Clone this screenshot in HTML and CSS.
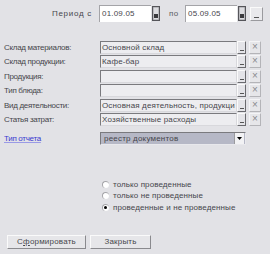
FILE: index.html
```html
<!DOCTYPE html>
<html>
<head>
<meta charset="utf-8">
<link rel="stylesheet" href="styles.css">
</head>
<body>
<div class="form">
  <div class="period">
    <span class="period-label">Период с</span>
    <div class="date">
      <span class="date-value">01.09.05</span>
      <span class="cal"><svg width="8" height="15" viewBox="0 0 8 15"><rect x="0.5" y="0.5" width="7" height="14" fill="#9a9a9e" stroke="#55555a"/><rect x="1.5" y="1.5" width="5" height="12" fill="#dcdce0"/><rect x="2" y="8" width="4" height="4" fill="#3a3a3e"/></svg></span>
    </div>
    <span class="po">по</span>
    <div class="date">
      <span class="date-value">05.09.05</span>
      <span class="cal"><svg width="8" height="15" viewBox="0 0 8 15"><rect x="0.5" y="0.5" width="7" height="14" fill="#9a9a9e" stroke="#55555a"/><rect x="1.5" y="1.5" width="5" height="12" fill="#dcdce0"/><rect x="2" y="8" width="4" height="4" fill="#3a3a3e"/></svg></span>
    </div>
    <span class="more-btn"><span class="dash"></span></span>
  </div>

  <div class="fields">
    <span class="lbl">Склад материалов:</span>
    <div class="input"><span class="val">Основной склад</span><span class="pick"><span class="dash"></span></span></div>
    <span class="clear">×</span>

    <span class="lbl">Склад продукции:</span>
    <div class="input"><span class="val">Кафе-бар</span><span class="pick"><span class="dash"></span></span></div>
    <span class="clear">×</span>

    <span class="lbl">Продукция:</span>
    <div class="input"><span class="val"></span><span class="pick"><span class="dash"></span></span></div>
    <span class="clear">×</span>

    <span class="lbl">Тип блюда:</span>
    <div class="input"><span class="val"></span><span class="pick"><span class="dash"></span></span></div>
    <span class="clear">×</span>

    <span class="lbl">Вид деятельности:</span>
    <div class="input"><span class="val">Основная деятельность, продукци</span><span class="pick"><span class="dash"></span></span></div>
    <span class="clear">×</span>

    <span class="lbl">Статья затрат:</span>
    <div class="input"><span class="val">Хозяйственные расходы</span><span class="pick"><span class="dash"></span></span></div>
    <span class="clear">×</span>
  </div>

  <div class="report">
    <span class="lbl link">Тип отчета</span>
    <div class="select"><span class="val">реестр документов</span><span class="arrow"><svg width="5" height="3" viewBox="0 0 5 3"><path d="M0 0H5L2.5 3Z" fill="#000"/></svg></span></div>
  </div>

  <div class="radios">
    <label class="radio"><span class="circle"></span>только проведенные</label>
    <label class="radio"><span class="circle"></span>только не проведенные</label>
    <label class="radio"><span class="circle on"></span>проведенные и не проведенные</label>
  </div>

  <div class="buttons">
    <span class="btn btn-main">С<u>ф</u>ормировать</span>
    <span class="btn btn-close">Закрыть</span>
  </div>
</div>
</body>
</html>
```
FILE: styles.css
```css
html, body {
  margin: 0;
  padding: 0;
}
body {
  width: 270px;
  height: 254px;
  background: #e2e2e6;
  font-family: "Liberation Sans", Arial, sans-serif;
  font-size: 8px;
  color: #46464c;
  overflow: hidden;
}
.form {
  display: flex;
  flex-direction: column;
}
.period {
  display: flex;
  align-items: center;
  height: 17px;
  margin-top: 5px;
  padding-left: 52px;
}
.period-label {
  width: 47px;
  letter-spacing: 0.7px;
}
.date {
  display: flex;
  align-items: center;
  width: 61px;
  height: 17px;
}
.date-value {
  flex: 1;
  height: 17px;
  line-height: 16px;
  background: #fff;
  border-top: 1px solid #a4a4a8;
  border-left: 1px solid #a4a4a8;
  box-sizing: border-box;
  padding-left: 2px;
  letter-spacing: 0.2px;
}
.cal {
  display: flex;
  width: 8px;
  margin-left: 1px;
}
.po {
  width: 25px;
  padding-left: 9px;
  box-sizing: border-box;
  color: #5a5a60;
  letter-spacing: 0.5px;
}
.more-btn {
  margin-left: 4px;
  width: 13px;
  height: 14px;
  box-sizing: border-box;
  background: #e9e9ec;
  border: 1px solid;
  border-color: #fafafa #9a9a9e #9a9a9e #fafafa;
  display: flex;
  align-items: flex-end;
  justify-content: center;
  padding-bottom: 2px;
}
.dash {
  display: block;
  width: 5px;
  height: 1px;
  background: #555;
}
.fields {
  display: grid;
  grid-template-columns: 93px 146px 12px;
  column-gap: 3px;
  row-gap: 1.4px;
  grid-auto-rows: 13px;
  margin-top: 19px;
  padding-left: 4px;
}
.lbl {
  line-height: 13px;
  letter-spacing: -0.3px;
  white-space: nowrap;
}
.input {
  display: flex;
  height: 13px;
}
.input .val {
  flex: 1;
  background: #ededf0;
  border: 1px solid;
  border-color: #7a7a7e #d8d8dc #d8d8dc #7a7a7e;
  box-sizing: border-box;
  line-height: 11px;
  padding-left: 1px;
  letter-spacing: 0.15px;
  white-space: nowrap;
  overflow: hidden;
}
.pick {
  width: 9px;
  height: 13px;
  box-sizing: border-box;
  background: #e4e4e8;
  border: 1px solid;
  border-color: #fafafa #6a6a6e #6a6a6e #fafafa;
  display: flex;
  align-items: flex-end;
  justify-content: center;
  padding-bottom: 2px;
}
.pick .dash {
  width: 4px;
}
.clear {
  height: 13px;
  box-sizing: border-box;
  border: 1px solid;
  border-color: #f4f4f6 #b4b4b8 #b4b4b8 #f4f4f6;
  background: #e6e6e9;
  color: #8a8a8e;
  font-size: 10px;
  line-height: 10px;
  text-align: center;
}
.report {
  display: grid;
  grid-template-columns: 93px 146px;
  column-gap: 3px;
  padding-left: 4px;
  margin-top: 6px;
  height: 13px;
}
.link {
  color: #3a3ad0;
  text-decoration: underline;
  text-decoration-color: #9a9ae6;
}
.select {
  display: flex;
  height: 13px;
  background: #b6b8c6;
  border: 1px solid;
  border-color: #7a7a7e #e8e8ec #e8e8ec #7a7a7e;
  box-sizing: border-box;
}
.select .val {
  flex: 1;
  line-height: 11px;
  padding-left: 3px;
  letter-spacing: 0.2px;
}
.select .arrow {
  width: 9px;
  background: #f2f2f4;
  border-left: 1px solid #9a9a9e;
  display: flex;
  align-items: center;
  justify-content: center;
  margin-right: 1px;
}
.radios {
  display: flex;
  flex-direction: column;
  gap: 2.5px;
  margin-top: 35px;
  padding-left: 102px;
}
.radio {
  display: flex;
  align-items: center;
  height: 9px;
  gap: 4px;
  letter-spacing: 0.1px;
}
.circle {
  width: 7px;
  height: 7px;
  border-radius: 50%;
  background: #fff;
  border-top: 1px solid #a4a4a8;
  border-left: 1px solid #a4a4a8;
  box-sizing: border-box;
  position: relative;
}
.circle.on::after {
  content: "";
  position: absolute;
  left: 1px;
  top: 1px;
  width: 3px;
  height: 3px;
  background: #000;
  border-radius: 50%;
}
.buttons {
  display: flex;
  gap: 4px;
  margin-top: 23px;
  padding-left: 7px;
}
.btn {
  height: 14px;
  box-sizing: border-box;
  border: 1px solid;
  border-color: #fafafa #8a8a8e #8a8a8e #fafafa;
  background: #e6e6e9;
  line-height: 12px;
  text-align: center;
  letter-spacing: 0.2px;
}
.btn-main {
  width: 79px;
}
.btn-close {
  width: 61px;
}
```
